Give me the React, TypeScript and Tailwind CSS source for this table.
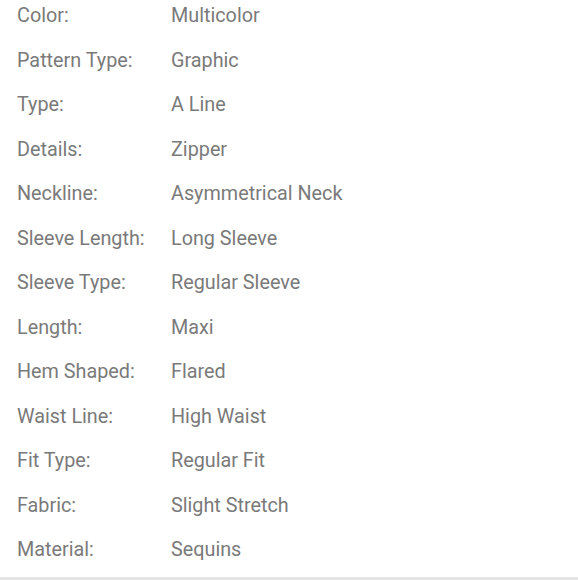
import React from 'react';

const specs: [string, string][] = [
  ['Color:', 'Multicolor'],
  ['Pattern Type:', 'Graphic'],
  ['Type:', 'A Line'],
  ['Details:', 'Zipper'],
  ['Neckline:', 'Asymmetrical Neck'],
  ['Sleeve Length:', 'Long Sleeve'],
  ['Sleeve Type:', 'Regular Sleeve'],
  ['Length:', 'Maxi'],
  ['Hem Shaped:', 'Flared'],
  ['Waist Line:', 'High Waist'],
  ['Fit Type:', 'Regular Fit'],
  ['Fabric:', 'Slight Stretch'],
  ['Material:', 'Sequins'],
];

export default function App() {
  return (
    <div className="w-[578px] h-[580px] bg-white border-b-[3px] border-[#e4e4e4] font-['Roboto',sans-serif] text-[#7a7a7a] text-[19.8px]">
      <div className="flex flex-col gap-[24.5px] pt-[6px] pl-[17px]">
        {specs.map(([label, value]) => (
          <div key={label} className="flex h-5 leading-5 items-center">
            <span className="w-[154px]">{label}</span>
            <span>{value}</span>
          </div>
        ))}
      </div>
    </div>
  );
}
